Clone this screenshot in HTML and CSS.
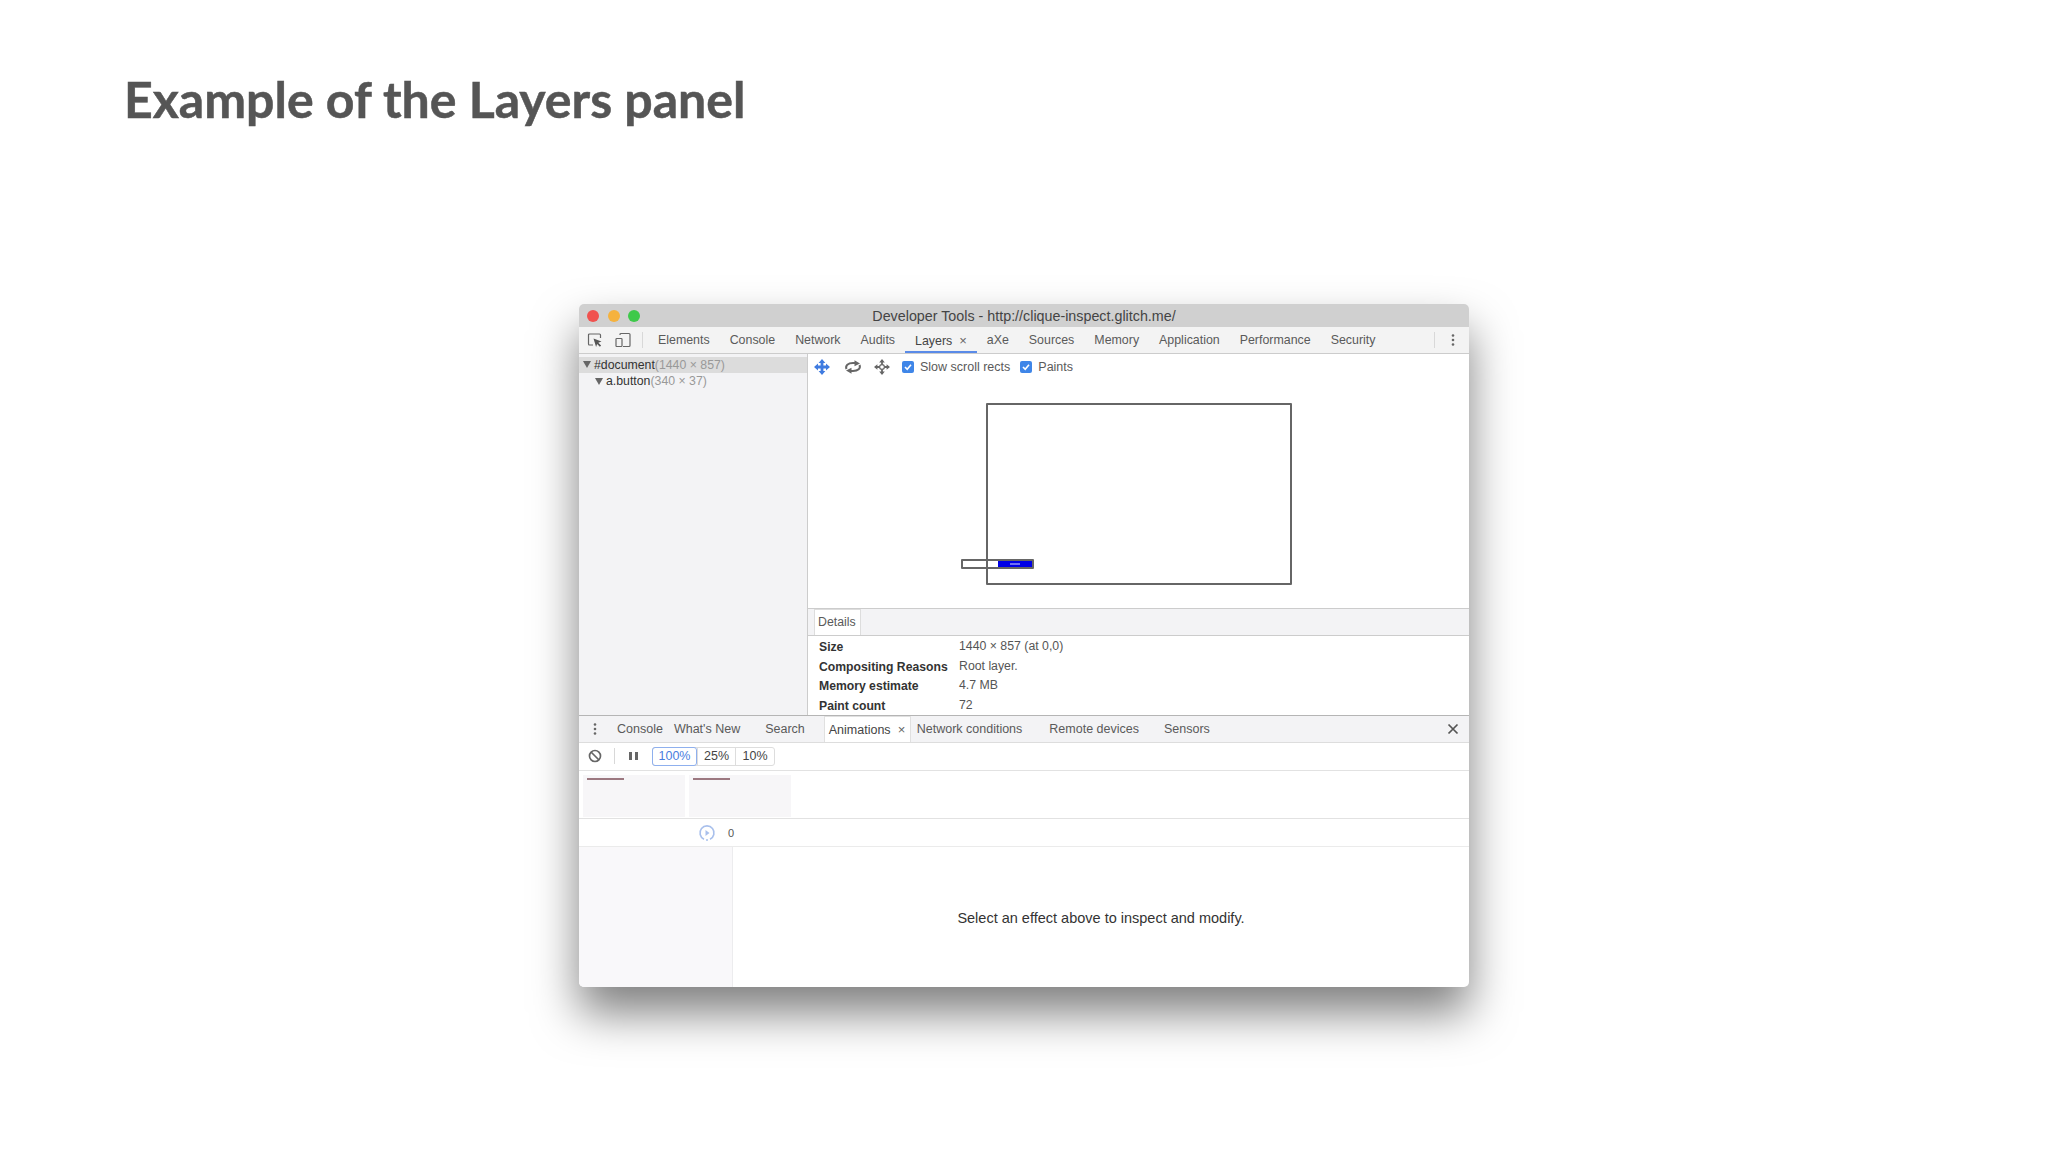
FILE: index.html
```html
<!DOCTYPE html>
<html lang="en">
<head>
<meta charset="utf-8">
<title>Example of the Layers panel</title>
<link rel="stylesheet" href="styles.css">
</head>
<body>
<h1 class="slide-title">Example of the Layers panel</h1>
<section class="window">
  <header class="titlebar">
    <div class="lights"><i class="light red"></i><i class="light yellow"></i><i class="light green"></i></div>
    <span>Developer Tools - http://clique-inspect.glitch.me/</span>
  </header>
  <nav class="toolbar">
    <svg class="icon ico-inspect" width="16" height="16" viewBox="0 0 16 16"><path d="M6 13H2.500a1 1 0 0 1-1-1V3a1 1 0 0 1 1-1h10a1 1 0 0 1 1 1v3" fill="none" stroke="#666" stroke-width="1.200"/><path d="M6.500 6.500l8 3-3.200 1.200 2.800 2.800-1.200 1.200-2.800-2.800-1 3z" fill="#555"/></svg>
    <svg class="icon ico-device" width="16" height="16" viewBox="0 0 16 16"><path d="M5 3V2.500a1 1 0 0 1 1-1h8a1 1 0 0 1 1 1v11a1 1 0 0 1-1 1H8" fill="none" stroke="#666" stroke-width="1.200"/><rect x="1" y="6.500" width="6" height="8" rx=".8" fill="none" stroke="#666" stroke-width="1.200"/></svg>
    <i class="divider d-main"></i>
    <a class="tab">Elements</a><a class="tab">Console</a><a class="tab">Network</a><a class="tab">Audits</a>
    <a class="tab active">Layers<b class="x">×</b></a>
    <a class="tab t-axe">aXe</a><a class="tab">Sources</a><a class="tab">Memory</a><a class="tab">Application</a><a class="tab">Performance</a><a class="tab">Security</a>
    <i class="divider d-end"></i>
    <svg class="kebab" width="4" height="14" viewBox="0 0 4 14"><circle cx="2" cy="2.500" r="1.300"/><circle cx="2" cy="7" r="1.300"/><circle cx="2" cy="11.500" r="1.300"/></svg>
  </nav>
  <div class="main">
    <aside class="tree">
      <div class="node selected"><i class="tri"></i><span>#document</span><em>(1440 × 857)</em></div>
      <div class="node child"><i class="tri"></i><span>a.button</span><em>(340 × 37)</em></div>
    </aside>
    <div class="layers">
      <div class="layer-tools">
        <svg class="tool t-move" width="16" height="16" viewBox="0 0 16 16"><path d="M8 3v10M3 8h10" stroke="#3f7be0" stroke-width="2.800" fill="none"/><path d="M8 0l3.400 4H4.600zM8 16l3.400-4H4.600zM0 8l4-3.400v6.800zM16 8l-4-3.400v6.800z" fill="#3f7be0"/></svg>
        <svg class="tool t-rotate" width="18" height="14" viewBox="0 0 18 14"><path d="M2.500 9C1 5.500 4 3 9 3h2" fill="none" stroke="#666" stroke-width="2"/><path d="M10.500 .3L16 3.600 10.500 6.300z" fill="#666"/><path d="M15.500 5C17 8.500 14 11 9 11H7" fill="none" stroke="#666" stroke-width="2"/><path d="M7.500 13.700L2 10.400 7.500 7.700z" fill="#666"/></svg>
        <svg class="tool t-pan" width="16" height="16" viewBox="0 0 16 16"><g fill="#666"><path d="M8 0l2.800 3.400H5.200zM8 16l2.800-3.400H5.200zM0 8l3.400-2.800v5.600zM16 8l-3.400-2.800v5.600z"/></g><path d="M8 3v2.500M8 10.500V13M3 8h2.500M10.500 8H13" stroke="#666" stroke-width="1.800"/><circle cx="8" cy="8" r="2.400" fill="none" stroke="#666" stroke-width="1.200"/></svg>
        <label class="check"><i class="box"><svg width="12" height="12" viewBox="0 0 12 12"><path d="M3 6l2.200 2.300L9 3.700" fill="none" stroke="#fff" stroke-width="1.600"/></svg></i>Slow scroll rects</label>
        <label class="check c-paints"><i class="box"><svg width="12" height="12" viewBox="0 0 12 12"><path d="M3 6l2.200 2.300L9 3.700" fill="none" stroke="#fff" stroke-width="1.600"/></svg></i>Paints</label>
      </div>
      <div class="canvas">
        <div class="rect root"></div>
        <div class="rect button"><div class="btn-fill"><span class="btn-label"></span></div></div>
      </div>
      <div class="details">
        <div class="subtabs"><span class="subtab">Details</span></div>
        <dl class="props">
          <dt>Size</dt><dd>1440 × 857 (at 0,0)</dd>
          <dt>Compositing Reasons</dt><dd>Root layer.</dd>
          <dt>Memory estimate</dt><dd>4.7 MB</dd>
          <dt>Paint count</dt><dd>72</dd>
        </dl>
      </div>
    </div>
  </div>
  <div class="drawer">
    <nav class="drawer-tabs">
      <svg class="kebab k-drawer" width="4" height="14" viewBox="0 0 4 14"><circle cx="2" cy="2.500" r="1.300"/><circle cx="2" cy="7" r="1.300"/><circle cx="2" cy="11.500" r="1.300"/></svg>
      <a class="dtab d-console">Console</a>
      <a class="dtab d-new">What's New</a>
      <a class="dtab d-search">Search</a>
      <a class="dtab d-anim">Animations<b class="x">×</b></a>
      <a class="dtab d-net">Network conditions</a>
      <a class="dtab d-remote">Remote devices</a>
      <a class="dtab d-sensors">Sensors</a>
      <svg class="close" width="12" height="12" viewBox="0 0 12 12"><path d="M1.500 1.500l9 9M10.500 1.500l-9 9" stroke="#555" stroke-width="1.700" fill="none"/></svg>
    </nav>
    <div class="anim-tools">
      <svg class="ban" width="14" height="14" viewBox="0 0 14 14"><circle cx="7" cy="7" r="5.500" fill="none" stroke="#666" stroke-width="1.700"/><path d="M3 3l8 8" stroke="#666" stroke-width="1.700"/></svg>
      <i class="divider d-anim-tool"></i>
      <svg class="pause" width="10" height="10" viewBox="0 0 10 10"><rect x="0" y="1" width="3" height="8" fill="#666"/><rect x="6" y="1" width="3" height="8" fill="#666"/></svg>
      <div class="speeds"><span class="speed on">100%</span><span class="speed s25">25%</span><span class="speed s10">10%</span></div>
    </div>
    <div class="thumbs">
      <div class="thumb"><i></i></div>
      <div class="thumb"><i></i></div>
    </div>
    <div class="timeline">
      <svg class="replay" width="18" height="18" viewBox="0 0 18 18"><path d="M6 15.200A7 7 0 1 1 12 15.200" fill="none" stroke="#a9c0ec" stroke-width="1.600"/><path d="M7.500 6l4 3-4 3z" fill="#a9c0ec"/><circle cx="9" cy="16" r="1" fill="#a9c0ec"/></svg>
      <span class="zero">0</span>
    </div>
    <div class="effect">
      <aside class="effect-side"></aside>
      <p class="effect-msg">Select an effect above to inspect and modify.</p>
    </div>
  </div>
</section>
</body>
</html>
```
FILE: styles.css
```css
* { box-sizing: border-box; }
html, body { margin: 0; padding: 0; }
body { width: 2048px; height: 1152px; background: #fff; overflow: hidden; font-family: "Liberation Sans", Arial, sans-serif; }
.slide-title { margin: 0; padding: 65px 0 0 124px; height: 304px; font: 700 50px/68px "Lato", sans-serif; color: #555; -webkit-text-stroke: .5px #555; }

.window { width: 890px; height: 683px; margin: 0 auto; display: flex; flex-direction: column; background: #fff; border-radius: 5px; box-shadow: 0 26px 46px rgba(0,0,0,.5); overflow: hidden; font-size: 12.300px; color: #5a5a5a; }
.titlebar { height: 23px; flex: none; background: #d0d0d0; position: relative; display: flex; align-items: center; justify-content: center; font-size: 14.300px; color: #444; }
.lights { position: absolute; left: 8px; top: 6px; display: flex; gap: 8.500px; }
.light { width: 12px; height: 12px; border-radius: 50%; }
.red { background: #f0524f; } .yellow { background: #f5b23e; } .green { background: #3ec94a; }

.toolbar { height: 27px; flex: none; background: #f3f3f3; border-bottom: 1px solid #ccc; display: flex; align-items: center; padding-left: 8px; position: relative; }
.ico-device { margin-left: 12px; }
.divider { display: block; width: 1px; height: 16px; background: #d8d8d8; flex: none; }
.d-main { margin: 0 15px 0 11px; }
.tab { margin-right: 20px; white-space: nowrap; height: 26px; line-height: 27px; position: relative; font-size: 12.400px; }
.tab.active { color: #444; }
.tab.active::after { content: ""; position: absolute; left: -10px; right: -10px; bottom: 0; height: 2px; background: #5a8be8; }
.x { font-weight: 400; font-size: 13px; margin-left: 7px; color: #666; }
.d-end { position: absolute; left: 855px; top: 5px; }
.kebab { fill: #666; flex: none; }
.toolbar .kebab { position: absolute; left: 872px; top: 6px; }

.main { height: 361px; flex: none; display: flex; }
.tree { width: 229px; flex: none; background: #f3f3f5; border-right: 1px solid #ccc; padding-top: 2.500px; }
.node { height: 16.500px; display: flex; align-items: center; color: #333; padding-left: 5px; white-space: nowrap; }
.node em { font-style: normal; color: #999; }
.node.selected { background: #dcdcdc; }
.node.child { padding-left: 17px; }
.tri { width: 0; height: 0; border-left: 4px solid transparent; border-right: 4px solid transparent; border-top: 7px solid #666; margin: 0 3px 0 -1px; flex: none; }

.layers { flex: 1; display: flex; flex-direction: column; min-width: 0; }
.layer-tools { height: 27px; flex: none; display: flex; align-items: center; padding: 0 0 1px 6px; }
.t-rotate { margin-left: 14px; }
.t-pan { margin-left: 12px; }
.check { display: flex; align-items: center; margin-left: 12px; white-space: nowrap; font-size: 12.500px; }
.c-paints { margin-left: 10px; }
.box { width: 12px; height: 12px; border-radius: 2px; background: #3f86e8; margin-right: 6px; display: block; }
.box svg { display: block; }

.canvas { flex: 1; position: relative; }
.rect { position: absolute; border: 2px solid #666; border-radius: 1px; }
.root { left: 178px; top: 22px; width: 306px; height: 182px; }
.button { left: 153px; top: 178px; width: 73px; height: 10px; display: flex; justify-content: flex-end; }
.btn-fill { width: 34px; background: #0000e6; display: flex; align-items: center; justify-content: center; }
.btn-label { width: 10px; height: 2px; background: #6f6ff5; }

.details { height: 107px; flex: none; border-top: 1px solid #ccc; }
.subtabs { height: 27px; background: #f3f3f5; border-bottom: 1px solid #ccc; padding-left: 6px; }
.subtab { display: block; width: 47px; height: 26px; background: #fff; border: 1px solid #ddd; border-bottom: 0; padding-left: 3px; line-height: 24px; }
.props { margin: 0; padding: 2px 0 0 11px; display: grid; grid-template-columns: 140px 1fr; grid-auto-rows: 19.500px; color: #555; }
.props dt { font-weight: 700; color: #333; padding-top: 2px; white-space: nowrap; font-size: 12.200px; }
.props dd { margin: 0; padding-top: 1px; white-space: nowrap; }

.drawer { flex: 1; display: flex; flex-direction: column; border-top: 1px solid #b5b5b5; min-height: 0; }
.drawer-tabs { height: 27px; flex: none; background: #f3f3f5; border-bottom: 1px solid #ddd; display: flex; align-items: center; position: relative; font-size: 12.500px; }
.k-drawer { margin-left: 14px; }
.dtab { white-space: nowrap; }
.d-console { margin-left: 20px; }
.d-new { margin-left: 11px; }
.d-search { margin-left: 25px; }
.d-anim { margin-left: 19px; height: 26px; background: #fff; border: 1px solid #e0e0e0; border-bottom: 0; padding: 0 5px 0 4px; line-height: 25px; color: #444; }
.d-net { margin-left: 5.500px; }
.d-remote { margin-left: 27px; }
.d-sensors { margin-left: 25px; }
.close { position: absolute; left: 868px; top: 7px; }

.anim-tools { height: 28px; flex: none; display: flex; align-items: center; border-bottom: 1px solid #e2e2e2; padding: 0 0 1px 9px; font-size: 12.500px; }
.d-anim-tool { margin: 0 0 0 12px; }
.pause { margin-left: 14px; }
.speeds { display: flex; margin-left: 13px; height: 19px; border: 1px solid #ddd; border-radius: 3px; color: #444; }
.speed { display: flex; align-items: center; justify-content: center; width: 38px; border-left: 1px solid #ddd; }
.speed.on { width: 45px; margin: -1px 0 -1px -1px; border: 1px solid #8fb0ee; border-radius: 3px; color: #4a7de0; }
.s10 { width: 39px; }

.thumbs { height: 48px; flex: none; display: flex; gap: 4px; padding: 4px 0 0 4px; border-bottom: 1px solid #e2e2e2; }
.thumb { width: 102px; height: 42px; background: #f7f6f8; padding: 3px 4px; }
.thumb i { display: block; width: 37px; height: 1.500px; background: #9c7880; }

.timeline { height: 28px; flex: none; display: flex; align-items: center; border-bottom: 1px solid #ebebeb; padding-left: 119px; }
.zero { margin-left: 12px; font-size: 11px; color: #555; }

.effect { flex: 1; display: flex; min-height: 0; }
.effect-side { width: 154px; flex: none; background: #f9f8fa; border-right: 1px solid #ececee; }
.effect-msg { flex: 1; margin: 0; padding-top: 2px; display: flex; align-items: center; justify-content: center; font-size: 14.500px; color: #333; }
```
